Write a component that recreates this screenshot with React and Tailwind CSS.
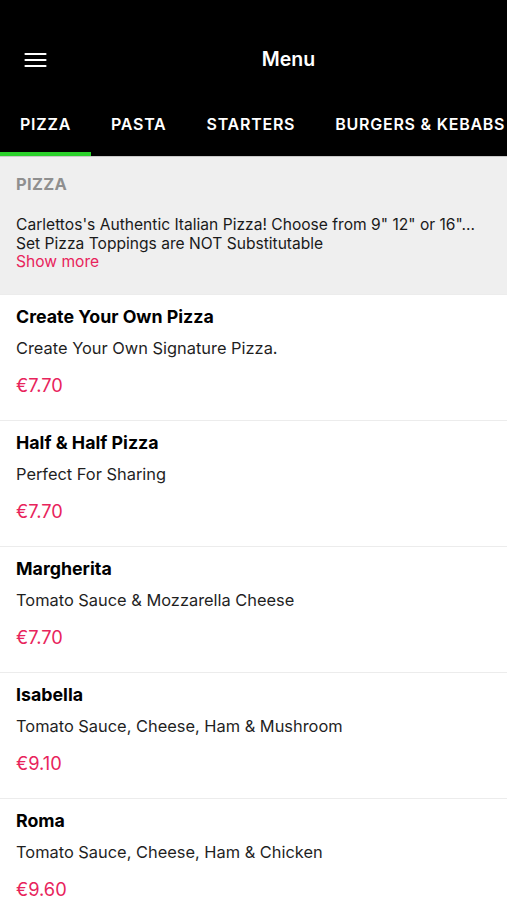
import React from 'react';

// Restaurant menu screen: black app bar with scrolling category tabs,
// a category intro block and the list of dishes.
const tabs = ['Pizza', 'Pasta', 'Starters', 'Burgers & Kebabs'];

const items = [
  { name: 'Create Your Own Pizza', desc: 'Create Your Own Signature Pizza.', price: '€7.70' },
  { name: 'Half & Half Pizza', desc: 'Perfect For Sharing', price: '€7.70' },
  { name: 'Margherita', desc: 'Tomato Sauce & Mozzarella Cheese', price: '€7.70' },
  { name: 'Isabella', desc: 'Tomato Sauce, Cheese, Ham & Mushroom', price: '€9.10' },
  { name: 'Roma', desc: 'Tomato Sauce, Cheese, Ham & Chicken', price: '€9.60' },
];

const MenuIcon = () => (
  <svg width="23" height="16" viewBox="0 0 23 16" fill="none" stroke="white" strokeWidth="2.2" strokeLinecap="round">
    <path d="M1.5 2h20M1.5 8h20M1.5 14h20" />
  </svg>
);

export default function App() {
  const [active, setActive] = React.useState(0);

  return (
    <div className="min-h-[900px] bg-white overflow-hidden" style={{ fontFamily: 'Inter, "Noto Sans", sans-serif' }}>
      <header className="bg-black text-white">
        <div className="h-[30px]" />
        <div className="relative flex h-[60px] items-center justify-center pl-[70px]">
          <button className="absolute left-6 top-1/2 -translate-y-1/2" aria-label="Open menu">
            <MenuIcon />
          </button>
          <h1 className="text-[19.5px] font-semibold">Menu</h1>
        </div>
        <nav className="flex h-[66px] whitespace-nowrap">
          {tabs.map((t, i) => (
            <button
              key={t}
              onClick={() => setActive(i)}
              className="relative px-5 pt-[2px] text-[16px] font-semibold uppercase tracking-[0.75px] text-white"
            >
              {t}
              {i === active && <span className="absolute bottom-0 left-0 right-0 h-[4px] bg-[#2bd12b]" />}
            </button>
          ))}
        </nav>
      </header>

      <section className="border-t border-[#c9c9c9] bg-[#efefef] px-4 pt-[15px] pb-[23px]">
        <h2 className="text-[16.5px] font-bold uppercase tracking-[0.3px] text-[#8f8f8f]">Pizza</h2>
        <p className="mt-[18px] text-[15.6px] leading-[19px] text-[#1a1a1a]">
          Carlettos's Authentic Italian Pizza! Choose from 9" 12" or 16"...
          <br />
          Set Pizza Toppings are NOT Substitutable
        </p>
        <button className="block -mt-px text-[15.6px] leading-[19px] text-[#e8245c]">Show more</button>
      </section>

      <ul>
        {items.map((it) => (
          <li key={it.name} className="h-[126px] border-t border-[#ececec] px-4 pt-[10px]">
            <div className="text-[17.8px] font-bold leading-[24px] text-black">{it.name}</div>
            <div className="mt-[7px] text-[16.4px] leading-[24px] text-[#1f1f1f]">{it.desc}</div>
            <div className="mt-[13px] text-[18.3px] leading-[24px] text-[#e8245c]">{it.price}</div>
          </li>
        ))}
      </ul>
    </div>
  );
}
